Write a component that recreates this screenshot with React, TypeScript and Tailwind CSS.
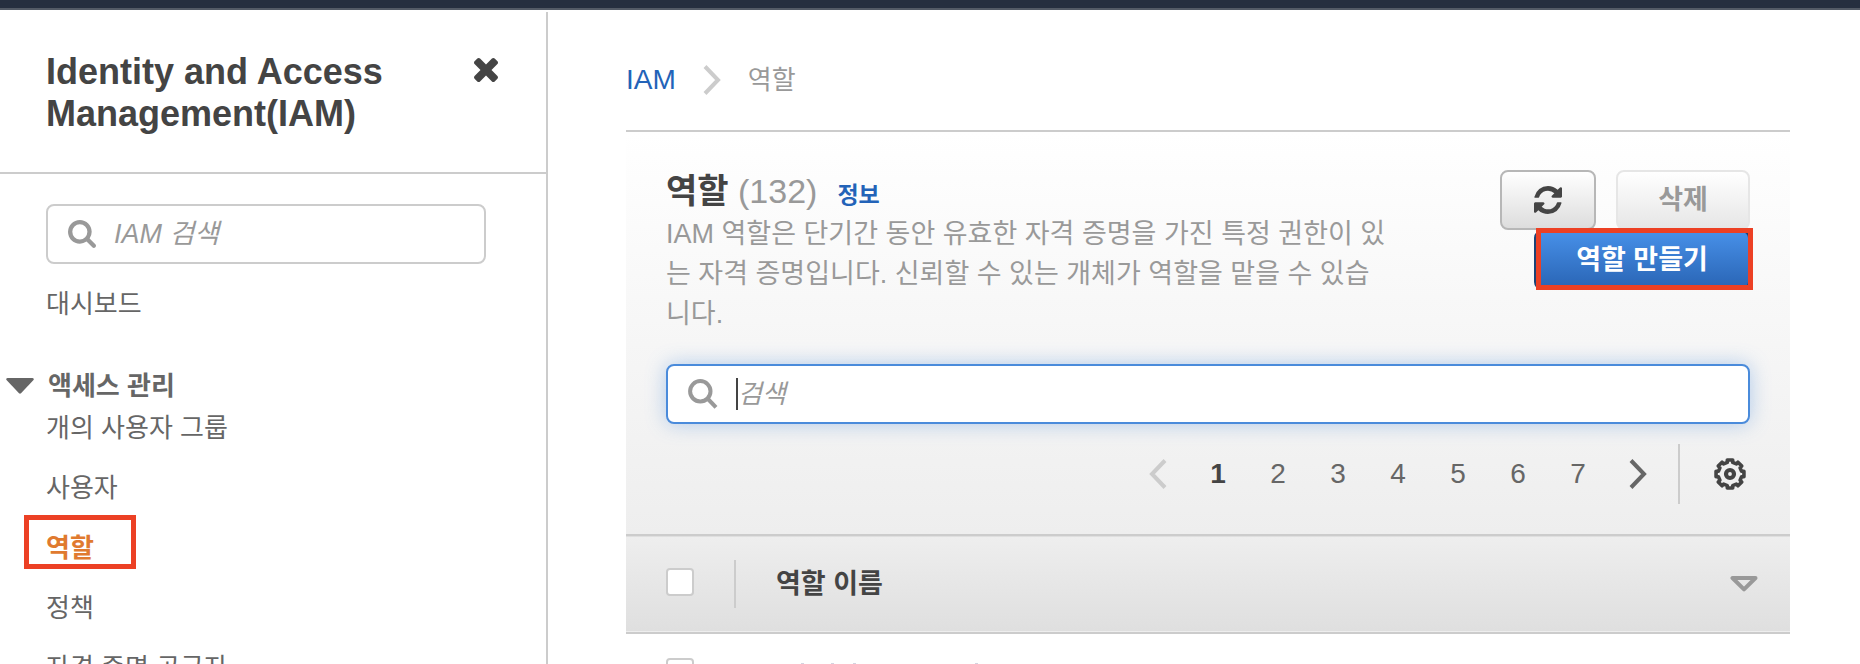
import React from "react";

const FONT = "font-['Liberation_Sans','Noto_Sans_CJK_KR',sans-serif]";

function CloseIcon() {
  return (
    <svg viewBox="302 366 1188 1188" className="size-6" fill="currentColor" aria-hidden="true">
      <path d="M1490 1322q0 40-28 68l-136 136q-28 28-68 28t-68-28l-294-294-294 294q-28 28-68 28t-68-28l-136-136q-28-28-28-68t28-68l294-294-294-294q-28-28-28-68t28-68l136-136q28-28 68-28t68 28l294 294 294-294q28-28 68-28t68 28l136 136q28 28 28 68t-28 68l-294 294 294 294q28 28 28 68z" />
    </svg>
  );
}

function SolidSearchIcon() {
  return (
    <svg viewBox="0 0 1664 1664" className="size-7 shrink-0" fill="currentColor" aria-hidden="true">
      <path d="M1152 704q0-185-131.5-316.5t-316.5-131.5-316.5 131.5-131.5 316.5 131.5 316.5 316.5 131.5 316.5-131.5 131.5-316.5zm512 832q0 52-38 90t-90 38q-54 0-90-38l-343-342q-179 124-399 124-143 0-273.5-55.5t-225-150-150-225-55.5-273.5 55.5-273.5 150-225 225-150 273.5-55.5 273.5 55.5 225 150 150 225 55.5 273.5q0 220-124 399l343 343q37 37 37 90z" />
    </svg>
  );
}

function LineSearchIcon() {
  return (
    <svg viewBox="0 0 30 30" className="size-[30px] shrink-0" fill="none" stroke="currentColor" strokeWidth="4" aria-hidden="true">
      <circle cx="12.3" cy="12.3" r="10.2" />
      <path d="M19.5 19.5L28 28.3" />
    </svg>
  );
}

function RefreshIcon() {
  return (
    <svg viewBox="0 0 1536 1536" className="size-7" fill="currentColor" aria-hidden="true">
      <path d="M1511 928q0 5-1 7-64 268-268 434.5t-478 166.5q-146 0-282.5-55t-243.5-157l-129 129q-19 19-45 19t-45-19-19-45v-448q0-26 19-45t45-19h448q26 0 45 19t19 45-19 45l-137 137q71 66 161 102t187 36q134 0 250-65t186-179q11-17 53-117 8-23 30-23h192q13 0 22.5 9.5t9.5 22.5zm25-800v448q0 26-19 45t-45 19h-448q-26 0-45-19t-19-45 19-45l138-138q-148-137-349-137-134 0-250 65t-186 179q-11 17-53 117-8 23-30 23h-199q-13 0-22.5-9.5t-9.5-22.5v-7q65-268 270-434.5t480-166.5q146 0 284 55.5t245 156.5l130-129q19-19 45-19t45 19 19 45z" />
    </svg>
  );
}

function Chevron({ direction }: { direction: "left" | "right" }) {
  return (
    <svg viewBox="0 0 20 30" className="h-[30px] w-5" fill="none" stroke="currentColor" strokeWidth="4" aria-hidden="true">
      <path d={direction === "left" ? "M17 1.5L4 15L17 28.5" : "M3 1.5L16 15L3 28.5"} />
    </svg>
  );
}

// Outline of a cog with eight teeth, centred on (16, 16).
const cogPath = (() => {
  const points: string[] = [];
  const steps: [number, number][] = [
    [-11, 14.2],
    [11, 14.2],
    [13, 11.9],
    [32, 11.9],
  ];
  for (let tooth = 0; tooth < 8; tooth++) {
    for (const [offset, radius] of steps) {
      const angle = ((tooth * 45 + offset - 90) * Math.PI) / 180;
      points.push(`${(16 + radius * Math.cos(angle)).toFixed(2)} ${(16 + radius * Math.sin(angle)).toFixed(2)}`);
    }
  }
  return `M${points.join("L")}Z`;
})();

function CogIcon() {
  return (
    <svg viewBox="0 0 32 32" className="size-8" fill="none" stroke="currentColor" strokeLinejoin="round" aria-hidden="true">
      <path d={cogPath} strokeWidth="3.6" />
      <circle cx="16" cy="16" r="4" strokeWidth="4.2" />
    </svg>
  );
}

const sidebarLinks = [
  { label: "개의 사용자 그룹" },
  { label: "사용자" },
  { label: "역할", active: true },
  { label: "정책" },
  { label: "자격 증명 공급자" },
];

function Sidebar() {
  return (
    <aside className="mt-0.5 flex w-[548px] shrink-0 flex-col border-r-2 border-[#cccccc]">
      <header className="flex items-start justify-between border-b-2 border-[#cccccc] pt-[39px] pr-12 pb-[37px] pl-[46px]">
        <h1 className="w-[380px] text-4xl leading-[42px] font-bold text-[#444444]">Identity and Access Management(IAM)</h1>
        <button type="button" aria-label="닫기" className="mt-[7px] text-[#444444]">
          <CloseIcon />
        </button>
      </header>
      <nav className="pt-[30px] pr-[60px] pl-[46px] text-[26px] leading-10 text-[#666666]">
        <label className="flex h-[60px] items-center gap-[18px] rounded-lg border-2 border-[#cccccc] px-5 text-[27px] text-[#999999]">
          <SolidSearchIcon />
          <input type="search" aria-label="IAM 검색" placeholder="IAM 검색" className="min-w-0 flex-1 bg-transparent italic outline-none placeholder:text-[#999999]" />
        </label>
        <a href="#dashboard" className="mt-5 block">대시보드</a>
        <button type="button" aria-expanded="true" className="mt-[42px] -ml-10 flex items-center gap-[14px] font-bold">
          <svg viewBox="0 0 28 16" className="h-4 w-7" fill="currentColor" aria-hidden="true">
            <path d="M1.5 0H26.5Q28.5 .5 27.5 2L15 15.300Q14 16 13 15.300L.5 2Q-.5 .5 1.500 0Z" />
          </svg>
          액세스 관리
        </button>
        <ul className="mt-0.5 flex flex-col gap-5">
          {sidebarLinks.map((link) => (
            <li key={link.label} className="relative">
              <a href="#" aria-current={link.active ? "page" : undefined} className={link.active ? "font-bold text-[#e07a2f]" : ""}>
                {link.label}
              </a>
              {link.active && <span className="pointer-events-none absolute -top-[13px] -left-[22px] h-[54px] w-28 border-5 border-[#ec4024]" />}
            </li>
          ))}
        </ul>
      </nav>
    </aside>
  );
}

function Pagination() {
  return (
    <nav aria-label="페이지" className="mt-5 flex h-[60px] items-center justify-end text-[28px] leading-10 text-[#666666]">
      <button type="button" disabled aria-label="이전" className="flex w-[60px] justify-center text-[#cccccc]">
        <Chevron direction="left" />
      </button>
      {[1, 2, 3, 4, 5, 6, 7].map((page) => (
        <button key={page} type="button" className={page === 1 ? "w-[60px] font-bold text-[#444444]" : "w-[60px]"}>
          {page}
        </button>
      ))}
      <button type="button" aria-label="다음" className="flex w-[60px] justify-center">
        <Chevron direction="right" />
      </button>
      <button type="button" aria-label="설정" className="ml-[10px] flex h-full items-center border-l-2 border-[#cccccc] pr-1 pl-[34px] text-[#444444]">
        <CogIcon />
      </button>
    </nav>
  );
}

function RolesTable() {
  const box = "block size-7 appearance-none rounded-sm border-2 border-[#cccccc] bg-white";
  return (
    <table className="w-full border-collapse">
      <thead>
        <tr className="border-y-2 border-[#cccccc] bg-linear-to-b from-[#eeeeee] to-[#dfdfdf] text-[27px] leading-10 font-bold text-[#444444]">
          <th className="w-[110px] p-0">
            <div className="flex h-12 items-center border-r-2 border-[#cccccc] pb-1 pl-10">
              <input type="checkbox" aria-label="모두 선택" className={box} />
            </div>
          </th>
          <th className="h-[98px] p-0 pr-8 pl-10">
            <div className="flex items-center justify-between">
              역할 이름
              <svg viewBox="0 0 28 16" className="h-4 w-7" fill="none" stroke="#999999" strokeWidth="4" strokeLinejoin="round" aria-hidden="true">
                <path d="M2.500 2H25.500L14 13.400Z" />
              </svg>
            </div>
          </th>
        </tr>
      </thead>
      <tbody>
        <tr>
          <td className="p-0 pt-6 pl-10 align-top">
            <input type="checkbox" aria-label="역할 선택" className={box} />
          </td>
          <td className="p-0 pt-[29px] pl-10 align-top">
            <svg viewBox="0 0 204 2" className="h-0.5 w-[204px]" fill="#d3d3e0" aria-hidden="true">
              <path d="M25 0h3v1h-3zM55 0h3v1h-3zM77 0h3v1h-3zM199 0h3v1h-3z" />
            </svg>
          </td>
        </tr>
      </tbody>
    </table>
  );
}

function RolesPanel() {
  return (
    <section className="border-t-2 border-[#cccccc]">
      <div className="bg-linear-to-b from-white to-[#eeeeee] px-10 pt-[38px] pb-[30px]">
        <div className="flex items-start justify-between">
          <div className="max-w-[724px]">
            <div className="flex h-11 items-baseline text-[34px] leading-[42px]">
              <h2 className="font-bold text-[#444444]">
                역할 <span className="font-normal text-[#999999]">(132)</span>
              </h2>
              <a href="#info" className="ml-5 text-[23px] font-bold text-[#2363b8]">정보</a>
            </div>
            <p className="text-[27px] leading-10 text-[#999999]">
              IAM 역할은 단기간 동안 유효한 자격 증명을 가진 특정 권한이 있는 자격 증명입니다. 신뢰할 수 있는 개체가 역할을 맡을 수 있습니다.
            </p>
          </div>
          <div className="flex w-[250px] flex-wrap justify-end gap-x-5 text-[27px] leading-10 font-bold">
            <button type="button" aria-label="새로 고침" className="flex h-[60px] w-24 items-center justify-center rounded-lg border-2 border-[#b7b7b7] bg-linear-to-b from-white to-[#dddddd] text-[#444444]">
              <RefreshIcon />
            </button>
            <button type="button" disabled className="h-[60px] w-[134px] rounded-lg border-2 border-[#e6e6e6] bg-linear-to-b from-white to-[#e6e6e6] text-[#999999]">
              삭제
            </button>
            <div className="relative">
              <button type="button" className="h-[60px] w-[216px] rounded-lg border-2 border-[#1a4377] bg-linear-to-b from-[#4790e8] to-[#2a65b5] text-white">
                역할 만들기
              </button>
              <span className="pointer-events-none absolute -top-0.5 -right-[3px] h-[62px] w-[217px] border-5 border-[#ec4024]" />
            </div>
          </div>
        </div>
        <label className="mt-[30px] flex h-[60px] items-center rounded-lg border-2 border-[#4a8bdb] bg-white px-5 text-[26px] leading-10 text-[#999999] shadow-[0_0_20px_rgba(74,139,219,0.4)]">
          <LineSearchIcon />
          <span className="ml-[18px] h-8 w-0.5 bg-[#444444]" />
          <input type="search" aria-label="검색" placeholder="검색" className="min-w-0 flex-1 bg-transparent italic caret-transparent outline-none placeholder:text-[#999999]" />
        </label>
        <Pagination />
      </div>
      <RolesTable />
    </section>
  );
}

export default function App() {
  return (
    <div className={`flex h-screen flex-col overflow-hidden bg-white ${FONT}`}>
      <div className="h-2.5 shrink-0 border-b-2 border-[#545b66] bg-[#262f3f]" />
      <div className="flex min-h-0 flex-1">
        <Sidebar />
        <main className="min-w-0 flex-1 pr-[70px] pl-[78px]">
          <nav aria-label="위치" className="flex h-[120px] items-center pt-5 text-[26px] leading-10">
            <a href="#iam" className="text-[28px] text-[#2363b8]">IAM</a>
            <span className="mx-[26px] text-[#cccccc]">
              <Chevron direction="right" />
            </span>
            <span className="text-[#999999]">역할</span>
          </nav>
          <RolesPanel />
        </main>
      </div>
    </div>
  );
}
